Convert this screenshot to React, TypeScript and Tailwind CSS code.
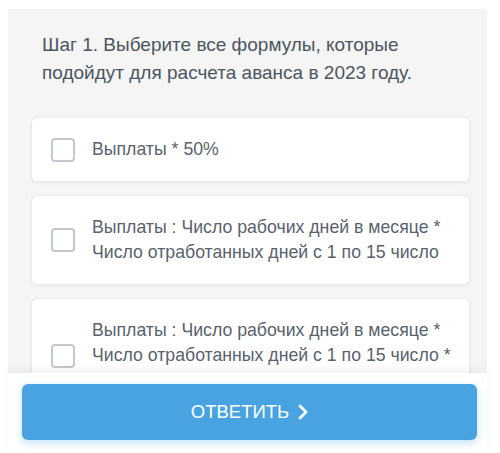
import React from "react";

const options = [
  { id: 1, text: "Выплаты * 50%" },
  { id: 2, text: "Выплаты : Число рабочих дней в месяце * Число отработанных дней с 1 по 15 число" },
  { id: 3, text: "Выплаты : Число рабочих дней в месяце * Число отработанных дней с 1 по 15 число * 50%" },
];

export default function App() {
  return (
    <div className="w-[500px] h-[453px] bg-white overflow-hidden font-['Liberation_Sans',Arial,sans-serif]">
      <div className="ml-[8px] mt-[9px] w-[479px] h-[444px] bg-[#f5f5f5] flex flex-col">
        <div className="flex-1 overflow-hidden pt-[22px]">
          <h1 className="px-[34px] text-[19px] leading-[28px] text-[#4b5560]">
            Шаг 1. Выберите все формулы, которые подойдут для расчета аванса в 2023 году.
          </h1>

          <div className="mt-[30px] ml-[23px] w-[439px] flex flex-col gap-[13px]">
            {options.map((o) => (
              <label
                key={o.id}
                className="flex items-center gap-[17px] bg-white rounded-[6px] border border-[#ebebeb] shadow-[0_1px_3px_rgba(0,0,0,0.06)] pl-[19px] pr-[12px] py-[19px] cursor-pointer"
              >
                <span className="shrink-0 w-[24px] h-[24px] rounded-[4px] border-2 border-[#c3c8ce] bg-white" />
                <span className="text-[17.7px] leading-[25px] text-[#59626c]">{o.text}</span>
              </label>
            ))}
          </div>
        </div>

        <div className="h-[80px] shrink-0 bg-white shadow-[0_-4px_8px_rgba(0,0,0,0.05)] pl-[14px] pr-[10px] pt-[11px]">
          <button className="w-full h-[56px] rounded-[6px] bg-[#4aa3e1] shadow-[0_3px_8px_rgba(74,163,225,0.35)] flex items-center justify-center gap-[9px] text-white text-[18.5px] uppercase">
            Ответить
            <svg width="10" height="16" viewBox="0 0 10 16" fill="none">
              <path d="M2 2l6 6-6 6" stroke="white" strokeWidth="2.8" strokeLinecap="round" strokeLinejoin="round" />
            </svg>
          </button>
        </div>
      </div>
    </div>
  );
}
